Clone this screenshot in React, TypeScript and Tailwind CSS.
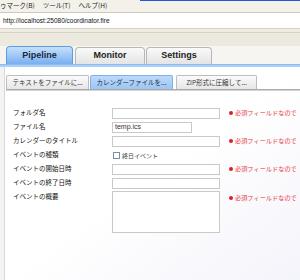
import React from 'react';

const jp = '"Noto Sans CJK JP", "Noto Sans", sans-serif';

function ErrorNote() {
  return (
    <div className="ml-[9px] flex items-center whitespace-nowrap text-[6.2px] text-[#e8343c]">
      <span className="mr-[2px] h-[4px] w-[4px] rounded-full bg-[#d8202a]" />
      必須フィールドなので
    </div>
  );
}

function Field({ w = 'w-[108px]', value = '' }: { w?: string; value?: string }) {
  return (
    <div
      className={`${w} flex h-[11px] items-center border border-[#c9c9c9] bg-white px-[2px] text-[7px] text-[#333]`}
      style={{ fontFamily: '"Liberation Sans", Arial, sans-serif' }}
    >
      {value}
    </div>
  );
}

function Row({
  label,
  children,
  error = false,
}: {
  label: string;
  children: React.ReactNode;
  error?: boolean;
}) {
  return (
    <div className="flex h-[14px] items-center">
      <div className="w-[99px] whitespace-nowrap text-[6.5px] text-[#111]">{label}</div>
      {children}
      {error && <ErrorNote />}
    </div>
  );
}

export default function App() {
  return (
    <div
      className="relative h-[280px] w-[300px] overflow-hidden bg-white"
      style={{ fontFamily: jp }}
    >
      {/* menu bar */}
      <div className="relative h-[12px] bg-[#f4f1ea]">
        <div className="absolute right-0 top-0 h-[1px] w-[160px] bg-[#2458d8]" />
        <div className="flex h-full items-center gap-[8px] whitespace-nowrap text-[6.5px] text-[#222]">
          <span>ゥマーク(B)</span>
          <span>ツール(T)</span>
          <span>ヘルプ(H)</span>
        </div>
      </div>
      <div className="h-[1px] bg-[#cdc9bd]" />
      {/* address bar */}
      <div
        className="flex h-[15px] items-center bg-white pl-[3px] text-[6.5px] text-[#111]"
        style={{ fontFamily: '"Liberation Sans", Arial, sans-serif' }}
      >
        http://localhost:25080/coordinator.fire
      </div>
      <div className="h-[1px] bg-[#d6d2c6]" />
      <div className="h-[3px] bg-[#efece3]" />
      <div className="h-[1px] bg-[#d6d2c6]" />
      <div className="h-[13px] bg-[#ece9df]" />

      {/* main tabs */}
      <div
        className="flex h-[18px] items-end bg-[#f6f5f1] pl-[6px]"
        style={{ fontFamily: '"Liberation Sans", Arial, sans-serif' }}
      >
        <div className="flex h-[18px] w-[67px] items-center justify-center rounded-t-[4px] border border-b-0 border-[#5c9ce4] bg-gradient-to-b from-[#c6e0fb] to-[#78aff0] text-[9px] font-bold text-[#1a2a40]">
          Pipeline
        </div>
        <div className="ml-[2px] flex h-[17px] w-[70px] items-center justify-center rounded-t-[4px] border border-b-0 border-[#b7b7b7] bg-gradient-to-b from-[#fafafa] to-[#e4e4e4] text-[9px] font-bold text-[#222]">
          Monitor
        </div>
        <div className="ml-[1px] flex h-[17px] w-[66px] items-center justify-center rounded-t-[4px] border border-b-0 border-[#b7b7b7] bg-gradient-to-b from-[#fafafa] to-[#e4e4e4] text-[9px] font-bold text-[#222]">
          Settings
        </div>
      </div>
      <div className="h-[3px] border-t border-[#8cbcf0] bg-[#a9d0f8]" />

      {/* body */}
      <div className="flex h-[213px]">
        <div className="w-[5px] border-r border-[#d8d8d8] bg-[#f3f3f3]" />
        <div className="flex-1 bg-gradient-to-br from-white via-white to-[#f4f4fb]">
          {/* sub tabs */}
          <div className="mt-[8px] flex h-[14px] items-end pl-[1px] text-[6.5px]">
            <div className="flex h-[14px] w-[83px] items-center justify-center whitespace-nowrap rounded-t-[2px] border border-b-0 border-[#bdbdbd] bg-gradient-to-b from-[#fbfbfb] to-[#e6e6e6] text-[#333]">
              テキストをファイルに...
            </div>
            <div className="ml-[1px] flex h-[14px] w-[83px] items-center justify-center whitespace-nowrap rounded-t-[2px] border border-b-0 border-[#7fb2ec] bg-gradient-to-b from-[#bcdafa] to-[#9cc6f4] text-[#1c2c44]">
              カレンダーファイルを...
            </div>
            <div className="ml-[3px] flex h-[14px] w-[81px] items-center justify-center whitespace-nowrap rounded-t-[2px] border border-b-0 border-[#bdbdbd] bg-gradient-to-b from-[#fbfbfb] to-[#e6e6e6] text-[#333]">
              ZIP形式に圧縮して...
            </div>
          </div>
          <div className="ml-[1px] h-[2px] border-t border-[#aaa] bg-[#d4d4d4]" />

          {/* form */}
          <div className="mt-[15px] pl-[8px]">
            <Row label="フォルダ名" error>
              <Field />
            </Row>
            <Row label="ファイル名">
              <Field w="w-[80px]" value="temp.ics" />
            </Row>
            <Row label="カレンダーのタイトル" error>
              <Field />
            </Row>
            <Row label="イベントの種類">
              <div className="flex items-center whitespace-nowrap text-[6px] text-[#444]">
                <span className="ml-[1px] mr-[2px] h-[7px] w-[7px] border border-[#7a8ea8] bg-white" />
                終日イベント
              </div>
            </Row>
            <Row label="イベントの開始日時" error>
              <Field />
            </Row>
            <Row label="イベントの終了日時">
              <Field />
            </Row>
            <div className="mt-[1px] flex items-start">
              <div className="mt-[1px] w-[99px] whitespace-nowrap text-[6.5px] text-[#111]">
                イベントの概要
              </div>
              <div className="h-[42px] w-[108px] border border-[#c9c9c9] bg-white" />
              <div className="mt-[2px]">
                <ErrorNote />
              </div>
            </div>
          </div>
        </div>
      </div>
    </div>
  );
}
